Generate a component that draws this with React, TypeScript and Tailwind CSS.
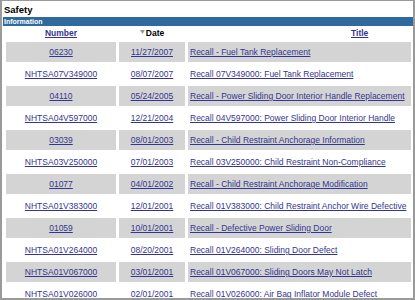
const rows = [
  ["06230", "11/27/2007", "Recall - Fuel Tank Replacement"],
  ["NHTSA07V349000", "08/07/2007", "Recall 07V349000: Fuel Tank Replacement"],
  ["04110", "05/24/2005", "Recall - Power Sliding Door Interior Handle Replacement"],
  ["NHTSA04V597000", "12/21/2004", "Recall 04V597000: Power Sliding Door Interior Handle"],
  ["03039", "08/01/2003", "Recall - Child Restraint Anchorage Information"],
  ["NHTSA03V250000", "07/01/2003", "Recall 03V250000: Child Restraint Non-Compliance"],
  ["01077", "04/01/2002", "Recall - Child Restraint Anchorage Modification"],
  ["NHTSA01V383000", "12/01/2001", "Recall 01V383000: Child Restraint Anchor Wire Defective"],
  ["01059", "10/01/2001", "Recall - Defective Power Sliding Door"],
  ["NHTSA01V264000", "08/20/2001", "Recall 01V264000: Sliding Door Defect"],
  ["NHTSA01V067000", "03/01/2001", "Recall 01V067000: Sliding Doors May Not Latch"],
  ["NHTSA01V026000", "02/01/2001", "Recall 01V026000: Air Bag Inflator Module Defect"],
];

export default function App() {
  return (
    <div
      className="w-[415px] h-[300px] overflow-hidden bg-white border-t border-l-2 border-r-2 border-b-2 border-[#9a9a9a]"
      style={{ fontFamily: '"Liberation Sans", Arial, sans-serif' }}
    >
      <div className="h-[16px] leading-[18px] pl-[2px] text-[9.5px] font-bold text-black">Safety</div>
      <div className="ml-[1px] h-[9px] leading-[9px] bg-[#2f699d] pl-[1px] text-[7px] font-bold text-white">
        Information
      </div>
      <div className="pl-[4px] grid grid-cols-[110px_66px_223px] gap-x-[3px] gap-y-[2px] text-[8.5px]">
        <div className="h-[14px] leading-[14px] text-center font-bold text-[#35358f] underline">Number</div>
        <div className="h-[14px] leading-[14px] flex items-center justify-center font-bold text-black">
          <svg width="5" height="4" viewBox="0 0 5 4" className="mr-[1px] mb-[2px]">
            <polygon points="0,0 5,0 2.5,4" fill="#9a9a9a" />
          </svg>
          Date
        </div>
        <div className="h-[14px] leading-[14px] pl-[163px] font-bold text-[#35358f] underline">Title</div>
        {rows.map((r, i) => {
          const bg = i % 2 === 0 ? "bg-[#d4d4d4]" : "bg-white";
          return [
            <div key={r[0] + "n"} className={`h-[20px] leading-[20px] text-center text-[#35358f] ${bg}`}>
              <span className="underline">{r[0]}</span>
            </div>,
            <div key={r[0] + "d"} className={`h-[20px] leading-[20px] text-center text-[#35358f] ${bg}`}>
              <span className="underline">{r[1]}</span>
            </div>,
            <div key={r[0] + "t"} className={`h-[20px] leading-[20px] pl-[2px] whitespace-nowrap text-[#35358f] ${bg}`}>
              <span className="underline">{r[2]}</span>
            </div>,
          ];
        })}
      </div>
    </div>
  );
}
